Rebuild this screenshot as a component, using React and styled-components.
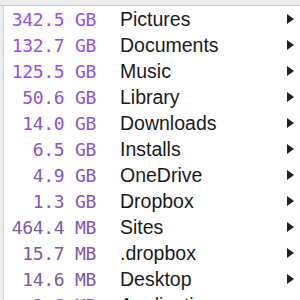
import React from 'react';
import styled, { createGlobalStyle } from 'styled-components';

const GlobalStyle = createGlobalStyle`
  html, body {
    margin: 0;
    padding: 0;
    background: #ffffff;
    overflow: hidden;
  }
`;

const Window = styled.div`
  width: 300px;
  height: 300px;
  overflow: hidden;
  display: flex;
  flex-direction: column;
  background: #ffffff;
`;

const TopBar = styled.div`
  height: 5px;
  flex-shrink: 0;
  background: #ececec;
  border-bottom: 1px solid #cdcdcd;
`;

const Body = styled.div`
  flex: 1;
  display: flex;
`;

const Gutter = styled.div`
  width: 3px;
  flex-shrink: 0;
  background: #ececec;
  border-right: 1px solid #cdcdcd;
`;

const List = styled.ul`
  flex: 1;
  margin: 0;
  padding: 0;
  list-style: none;
`;

const Row = styled.li`
  height: 26px;
  display: flex;
  align-items: center;
`;

const Size = styled.span`
  width: 92px;
  flex-shrink: 0;
  text-align: right;
  font-family: 'DejaVu Sans Mono', 'Liberation Mono', monospace;
  font-size: 18px;
  letter-spacing: -0.3px;
  color: ${p => p.$color};
  white-space: pre;
`;

const Name = styled.span`
  flex: 1;
  margin-left: 24px;
  font-family: 'Liberation Sans', Arial, sans-serif;
  font-size: 19.5px;
  color: #1a1a1a;
  white-space: nowrap;
`;

const Arrow = styled.span`
  width: 0;
  height: 0;
  margin-right: 6px;
  border-top: 5px solid transparent;
  border-bottom: 5px solid transparent;
  border-left: 7px solid #222222;
`;

const items = [
  ['342.5 GB', 'Pictures'],
  ['132.7 GB', 'Documents'],
  ['125.5 GB', 'Music'],
  ['50.6 GB', 'Library'],
  ['14.0 GB', 'Downloads'],
  ['6.5 GB', 'Installs'],
  ['4.9 GB', 'OneDrive'],
  ['1.3 GB', 'Dropbox'],
  ['464.4 MB', 'Sites'],
  ['15.7 MB', '.dropbox'],
  ['14.6 MB', 'Desktop'],
  ['3.6 MB', 'Applications'],
];

const shade = i => {
  const t = Math.min(i / 10, 1);
  const r = Math.round(155 + (122 - 155) * t);
  const g = Math.round(78 + (88 - 78) * t);
  const b = Math.round(238 + (172 - 238) * t);
  return `rgb(${r}, ${g}, ${b})`;
};

export default function App() {
  return (
    <>
      <GlobalStyle />
      <Window>
        <TopBar />
        <Body>
          <Gutter />
          <List>
            {items.map(([size, name], i) => (
              <Row key={name}>
                <Size $color={shade(i)}>{size}</Size>
                <Name>{name}</Name>
                <Arrow />
              </Row>
            ))}
          </List>
        </Body>
      </Window>
    </>
  );
}
